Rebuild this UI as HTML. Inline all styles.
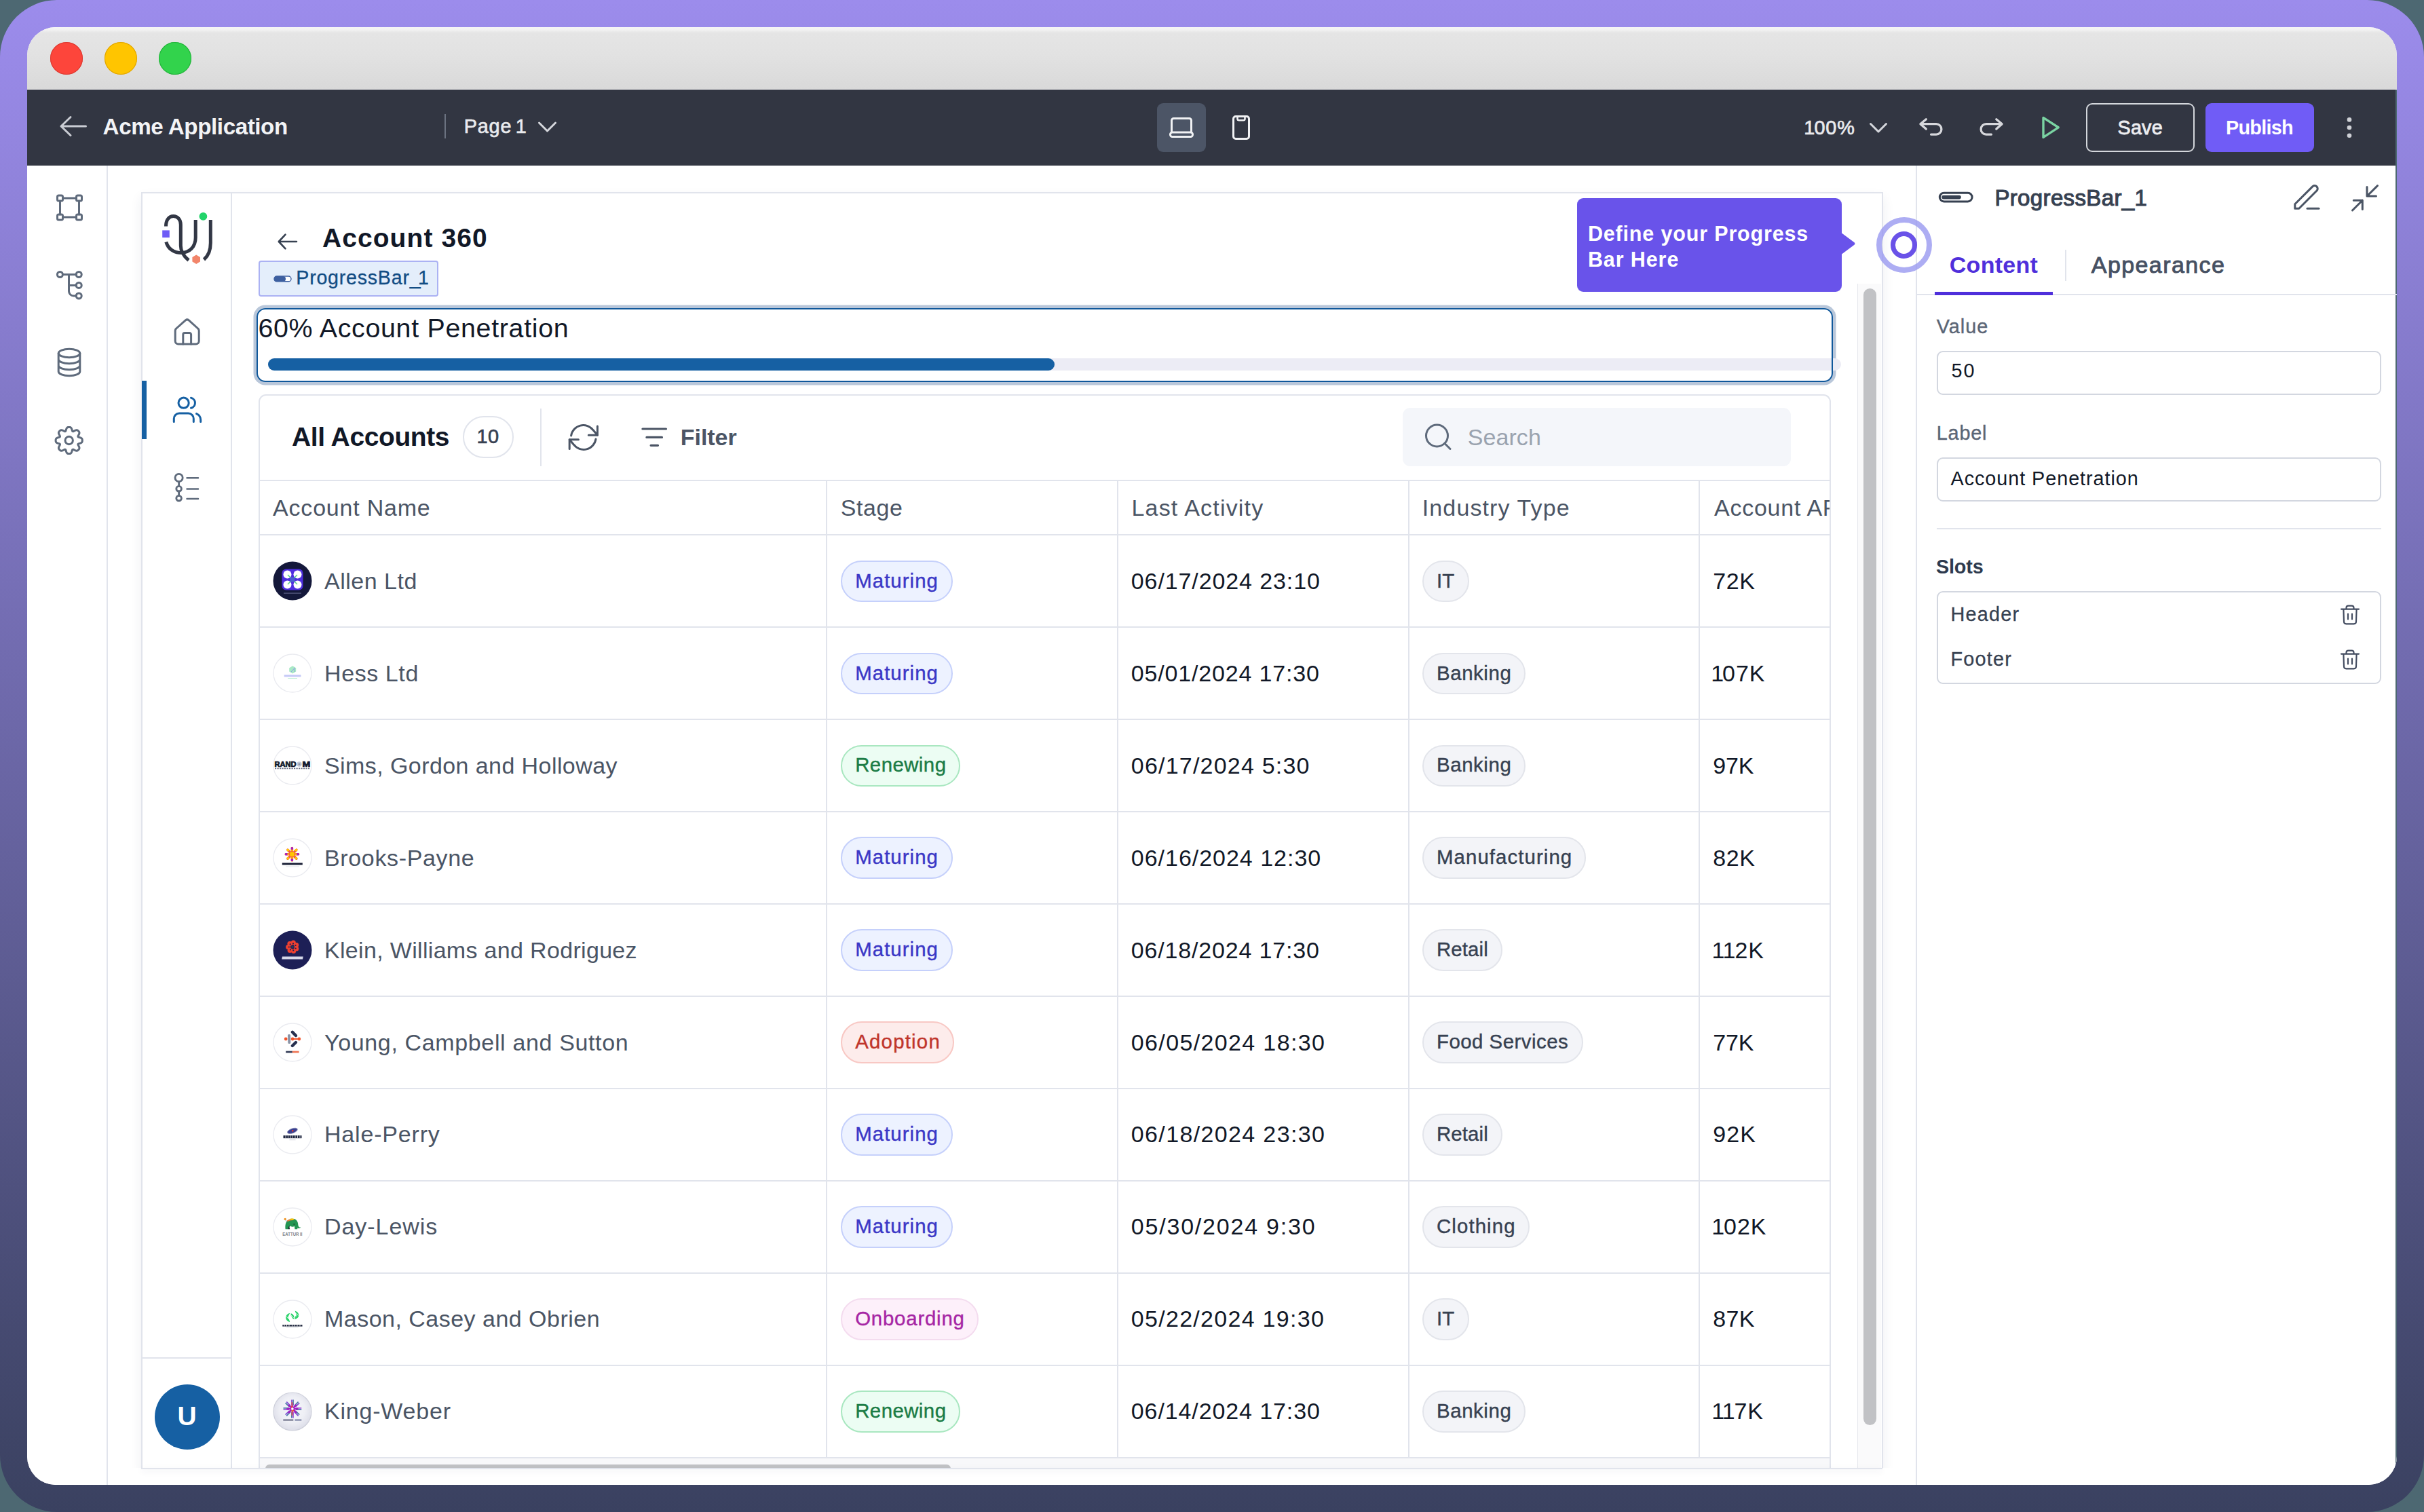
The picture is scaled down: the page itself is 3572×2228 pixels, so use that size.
<!DOCTYPE html>
<html><head><meta charset="utf-8"><title>Acme Application</title>
<style>
html,body{margin:0;padding:0;}
body{width:3572px;height:2228px;overflow:hidden;background:#4d6872;font-family:"Liberation Sans",sans-serif;}
#bg{position:absolute;left:0;top:0;width:3572px;height:2228px;border-radius:84px;background:linear-gradient(180deg,#9c8cec 0%,#3a4160 100%);}
#win{position:absolute;left:40px;top:40px;width:3492px;height:2148px;border-radius:42px;overflow:hidden;background:#fff;}
#c{position:absolute;left:-40px;top:-40px;width:3572px;height:2228px;}
#c div,#c svg,#c span{position:absolute;}
#c span{white-space:pre;}
#c svg{overflow:visible;}
</style></head>
<body>
<div id="bg"></div>
<div id="win"><div id="c">
<div style="left:40px;top:40px;width:3492px;height:92px;background:linear-gradient(180deg,#f5f5f5 0px,#f2f2f2 4px,#e5e5e5 8.5px,#e2e2e2 40px,#d9d9d9 91px);"></div>
<div style="left:74px;top:62px;width:48px;height:48px;border-radius:50%;background:#fd453b;box-shadow:inset 0 0 0 1px #d93a31;"></div>
<div style="left:154px;top:62px;width:48px;height:48px;border-radius:50%;background:#ffc500;box-shadow:inset 0 0 0 1px #dfa300;"></div>
<div style="left:234px;top:62px;width:48px;height:48px;border-radius:50%;background:#32d34c;box-shadow:inset 0 0 0 1px #22b23a;"></div>
<div style="left:40px;top:132px;width:3492px;height:112px;background:#323642;"></div>
<div style="left:40px;top:244px;width:3492px;height:1944px;background:#fff;"></div>
<div style="left:3530px;top:132px;width:2px;height:2056px;background:#4d6872;"></div>
<div style="left:40px;top:131px;width:3492px;height:1.2px;background:#f4f4f4;"></div>
<div style="left:157px;top:244px;width:2px;height:1944px;background:#e1e4ec;"></div>
<div style="left:2823px;top:244px;width:2px;height:1944px;background:#e1e4ec;"></div>
<svg style="left:80px;top:160px;" width="60" height="52" viewBox="0 0 60 52" fill="none"><path d="M46.5 26H10.5M24 12.5L10 26l14 13.5" stroke="#c9ccd3" stroke-width="3" stroke-linecap="round" stroke-linejoin="round"/></svg>
<div style="left:654.5px;top:168px;width:2px;height:36px;background:#6b7280;"></div>
<svg style="left:786px;top:172px;" width="40" height="30" viewBox="0 0 40 30" fill="none"><path d="M8.5 9L20.5 21L32.5 9" stroke="#d5d7dc" stroke-width="3" stroke-linecap="round" stroke-linejoin="round"/></svg>
<div style="left:1705px;top:152px;width:72px;height:72px;background:#4c5566;border-radius:9px;"></div>
<svg style="left:1705px;top:152px;" width="72" height="72" viewBox="0 0 72 72" fill="none"><path d="M21.5 43V25.5a3 3 0 0 1 3-3h23a3 3 0 0 1 3 3V43" stroke="#f1f2f4" stroke-width="3"/><rect x="19.5" y="43" width="33" height="6.5" rx="3" stroke="#f1f2f4" stroke-width="3"/></svg>
<svg style="left:1800px;top:152px;" width="60" height="72" viewBox="0 0 60 72" fill="none"><rect x="17.5" y="19.5" width="23" height="33" rx="3.5" stroke="#f1f2f4" stroke-width="3"/><path d="M23.5 20v3a2.2 2.2 0 0 0 2.2 2.2h6.600000000000001a2.2 2.2 0 0 0 2.2-2.2v-3" stroke="#f1f2f4" stroke-width="2.6"/></svg>
<svg style="left:2748px;top:173px;" width="40" height="30" viewBox="0 0 40 30" fill="none"><path d="M8.5 9.5L20 21L31.5 9.5" stroke="#d5d7dc" stroke-width="3" stroke-linecap="round" stroke-linejoin="round"/></svg>
<svg style="left:2820px;top:165px;" width="52" height="44" viewBox="0 0 52 44" fill="none"><path d="M18.3 10.7L9.9 17.7L18.3 25.1M10.5 17.7H33.2a7.7 7.7 0 0 1 0 15.4H25.5" stroke="#d6d7db" stroke-width="3.3" stroke-linecap="round" stroke-linejoin="round"/></svg>
<svg style="left:2908px;top:165px;" width="52" height="44" viewBox="0 0 52 44" fill="none"><path d="M33.8 10.7L42.1 17.7L33.8 25.1M41.5 17.7H18.8a7.7 7.7 0 0 0 0 15.4H26.5" stroke="#d6d7db" stroke-width="3.3" stroke-linecap="round" stroke-linejoin="round"/></svg>
<svg style="left:3000px;top:165px;" width="44" height="46" viewBox="0 0 44 46" fill="none"><path d="M11 8.4L33.2 22.8L11 37.4Z" stroke="#7ad3a2" stroke-width="3.4" stroke-linejoin="round"/></svg>
<div style="left:3074px;top:152px;width:160px;height:72px;border:2px solid #d4d7dc;border-radius:9px;box-sizing:border-box;"></div>
<div style="left:3250px;top:152px;width:160px;height:72px;background:#705cf6;border-radius:9px;"></div>
<svg style="left:3450px;top:165px;" width="24" height="46" viewBox="0 0 24 46" fill="none"><circle cx="12" cy="11.4" r="3.3" fill="#cfd1d6"/><circle cx="12" cy="23" r="3.3" fill="#cfd1d6"/><circle cx="12" cy="34.7" r="3.3" fill="#cfd1d6"/></svg>
<svg style="left:78px;top:281px;" width="50" height="50" viewBox="0 0 50 50" fill="none"><g stroke="#5f6b7c" stroke-width="3" stroke-linecap="round" stroke-linejoin="round"><rect x="6.5" y="7" width="8" height="8" rx="2"/><rect x="34.5" y="7" width="8" height="8" rx="2"/><rect x="6.5" y="35" width="8" height="8" rx="2"/><rect x="34.5" y="35" width="8" height="8" rx="2"/><path d="M14.5 11H34.5M14.5 39H34.5M10.5 15V35M38.500000000000004 15V35"/></g></svg>
<svg style="left:77.5px;top:394px;" width="50" height="52" viewBox="0 0 50 52" fill="none"><g stroke="#5f6b7c" stroke-width="3" stroke-linecap="round" stroke-linejoin="round"><circle cx="10.4" cy="10.5" r="4"/><circle cx="38.2" cy="10.5" r="4"/><circle cx="38.2" cy="26.4" r="4"/><circle cx="38.2" cy="42" r="4"/><path d="M14.4 10.5H34.2M23.5 10.5V35a7 7 0 0 0 7 7h3.7M23.5 26.4H34.2"/></g></svg>
<svg style="left:78px;top:507.3px;" width="50" height="54" viewBox="0 0 50 54" fill="none"><g stroke="#5f6b7c" stroke-width="3" stroke-linecap="round" stroke-linejoin="round"><ellipse cx="24" cy="13.5" rx="15.8" ry="6.3"/><path d="M8.2 13.5V40.5c0 3.5 7 6.300000000000001 15.8 6.300000000000001s15.8-2.8 15.8-6.300000000000001V13.5M8.2 22.5c0 3.5 7 6.300000000000001 15.8 6.300000000000001s15.8-2.8 15.8-6.300000000000001M8.2 31.5c0 3.5 7 6.300000000000001 15.8 6.300000000000001s15.8-2.8 15.8-6.300000000000001"/></g></svg>
<svg style="left:70px;top:620px;" width="64" height="60" viewBox="0 0 64 60" fill="none"><g stroke="#5f6b7c" stroke-width="3" stroke-linecap="round" stroke-linejoin="round"><path d="M31.70 9.40L32.47 9.42L33.23 9.52L33.97 9.80L34.66 10.34L35.25 11.17L35.72 12.24L36.09 13.43L36.40 14.52L36.73 15.36L37.17 15.79L37.79 15.79L38.61 15.44L39.61 14.88L40.70 14.31L41.80 13.88L42.81 13.71L43.67 13.81L44.39 14.14L45.00 14.61L45.56 15.14L46.09 15.70L46.56 16.31L46.89 17.03L46.99 17.89L46.82 18.90L46.39 20.00L45.82 21.09L45.26 22.09L44.91 22.91L44.91 23.53L45.34 23.97L46.18 24.30L47.27 24.61L48.46 24.98L49.53 25.45L50.36 26.04L50.90 26.73L51.18 27.47L51.28 28.23L51.30 29.00L51.28 29.77L51.18 30.53L50.90 31.27L50.36 31.96L49.53 32.55L48.46 33.02L47.27 33.39L46.18 33.70L45.34 34.03L44.91 34.47L44.91 35.09L45.26 35.91L45.82 36.91L46.39 38.00L46.82 39.10L46.99 40.11L46.89 40.97L46.56 41.69L46.09 42.30L45.56 42.86L45.00 43.39L44.39 43.86L43.67 44.19L42.81 44.29L41.80 44.12L40.70 43.69L39.61 43.12L38.61 42.56L37.79 42.21L37.17 42.21L36.73 42.64L36.40 43.48L36.09 44.57L35.72 45.76L35.25 46.83L34.66 47.66L33.97 48.20L33.23 48.48L32.47 48.58L31.70 48.60L30.93 48.58L30.17 48.48L29.43 48.20L28.74 47.66L28.15 46.83L27.68 45.76L27.31 44.57L27.00 43.48L26.67 42.64L26.23 42.21L25.61 42.21L24.79 42.56L23.79 43.12L22.70 43.69L21.60 44.12L20.59 44.29L19.73 44.19L19.01 43.86L18.40 43.39L17.84 42.86L17.31 42.30L16.84 41.69L16.51 40.97L16.41 40.11L16.58 39.10L17.01 38.00L17.58 36.91L18.14 35.91L18.49 35.09L18.49 34.47L18.06 34.03L17.22 33.70L16.13 33.39L14.94 33.02L13.87 32.55L13.04 31.96L12.50 31.27L12.22 30.53L12.12 29.77L12.10 29.00L12.12 28.23L12.22 27.47L12.50 26.73L13.04 26.04L13.87 25.45L14.94 24.98L16.13 24.61L17.22 24.30L18.06 23.97L18.49 23.53L18.49 22.91L18.14 22.09L17.58 21.09L17.01 20.00L16.58 18.90L16.41 17.89L16.51 17.03L16.84 16.31L17.31 15.70L17.84 15.14L18.40 14.61L19.01 14.14L19.73 13.81L20.59 13.71L21.60 13.88L22.70 14.31L23.79 14.88L24.79 15.44L25.61 15.79L26.23 15.79L26.67 15.36L27.00 14.52L27.31 13.43L27.68 12.24L28.15 11.17L28.74 10.34L29.43 9.80L30.17 9.52L30.93 9.42Z"/><circle cx="31.7" cy="29" r="5.7"/></g></svg>
<div style="left:208px;top:283px;width:2567px;height:1882px;border:2px solid #e1e4ec;box-sizing:border-box;background:#fff;box-shadow:0 8px 16px rgba(40,50,90,.08);"></div>
<div style="left:340px;top:285px;width:2px;height:1878px;background:#e1e4ec;"></div>
<div style="left:210px;top:2000px;width:130px;height:2px;background:#e1e4ec;"></div>
<div style="left:209px;top:561px;width:7px;height:86px;background:#1660a3;"></div>
<div style="left:227.7px;top:2039.6px;width:96px;height:96px;border-radius:50%;background:#1660a3;"></div>
<svg style="left:232px;top:306px;" width="90" height="90" viewBox="0 0 90 90" fill="none"><g stroke="#323745" stroke-width="5" stroke-linecap="butt" fill="none">
<path d="M12.5 27.5C12.5 18 17 12.5 23.5 12.5C30 12.5 34.3 18 34.3 25V56C34.3 64 38 71 46 77.5"/>
<path d="M12.8 50.5C15.5 60 23.5 66.5 34.5 66.5C47 66.5 56.2 58 56.2 44V18"/>
<path d="M78.3 18V52C78.3 63 75 71 68.5 76.5"/>
</g>
<circle cx="67.4" cy="12.8" r="5.9" fill="#22d46a"/>
<rect x="7.2" y="33.4" width="10.6" height="10.6" fill="#6f5cf6"/>
<path d="M57.2 69.6L63 73V79.6L57.2 83L51.4 79.6V73Z" fill="#f2856a"/></svg>
<svg style="left:250px;top:462px;" width="52" height="54" viewBox="0 0 52 54" fill="none"><g stroke="#5f6b7c" stroke-width="3" stroke-linecap="round" stroke-linejoin="round"><path d="M8.2 25.3V40.5a4.5 4.5 0 0 0 4.5 4.5H38.7a4.5 4.5 0 0 0 4.5-4.5V25.3a4.2 4.2 0 0 0-1.6-3.3L28.2 9.9a3.8 3.8 0 0 0-4.8 0L9.8 22a4.2 4.2 0 0 0-1.6 3.3Z"/><path d="M19.8 45V31a2.4 2.4 0 0 1 2.4-2.4h7a2.4 2.4 0 0 1 2.4 2.4V45"/></g></svg>
<svg style="left:248px;top:578px;" width="56" height="52" viewBox="0 0 56 52" fill="none"><g stroke="#1660a3" stroke-width="3" stroke-linecap="round" stroke-linejoin="round"><circle cx="22.6" cy="15.7" r="7.6"/><path d="M8.3 43.5v-4.6a7.8 7.8 0 0 1 7.8-7.8h13.4a7.8 7.8 0 0 1 7.8 7.8v4.6"/><path d="M33.5 8.2a7.7 7.7 0 0 1 0 15"/><path d="M41.5 31.6a10 10 0 0 1 6.2 9.2v2.7"/></g></svg>
<svg style="left:250px;top:690px;" width="52" height="56" viewBox="0 0 52 56" fill="none"><g stroke="#5f6b7c" stroke-width="2.8" stroke-linecap="round"><circle cx="13.6" cy="14" r="5.6"/><circle cx="13.6" cy="30.2" r="3.8"/><circle cx="13.6" cy="44.2" r="3.8"/><path d="M13.6 19.6V26.4M13.6 34V40.4"/><path stroke-width="2.5" d="M25.5 14.2H42M25.5 30.4H42M25.5 45H42"/></g></svg>
<svg style="left:400px;top:336px;" width="50" height="40" viewBox="0 0 50 40" fill="none"><path d="M37 20H11M20.5 9.7L10.8 20l9.7 10.3" stroke="#374151" stroke-width="2.6" stroke-linecap="round" stroke-linejoin="round"/></svg>
<div style="left:381px;top:384.3px;width:265.4px;height:52.5px;background:#e4eefb;border:2px solid #abb2f3;border-radius:4px;box-sizing:border-box;"></div>
<svg style="left:400px;top:400px;" width="34" height="22" viewBox="0 0 34 22" fill="none"><rect x="4" y="7" width="25" height="7.8" rx="3.9" fill="#fff" stroke="#3d5fa0" stroke-width="1.4"/><rect x="4" y="7" width="17" height="7.8" rx="3.9" fill="#3d5fa0"/></svg>
<div style="left:2324px;top:292.3px;width:390px;height:137.7px;background:#6953ea;border-radius:9px;"></div>
<svg style="left:2712px;top:340px;" width="26" height="40" viewBox="0 0 26 40" fill="none"><path d="M0 2L20.5 17.2a2.2 2.2 0 0 1 0 3.6L0 36Z" fill="#6953ea"/></svg>
<div style="left:378.3px;top:453.7px;width:2322.7px;height:109.3px;background:#fff;border-radius:13px;box-shadow:0 0 0 4.5px #b9c7da;"></div>
<div style="left:394.8px;top:527.8px;width:2318.2px;height:18.6px;background:#ececf5;border-radius:9.3px;"></div>
<div style="left:394.8px;top:527.8px;width:1158.9px;height:18.6px;background:#1660a3;border-radius:9.3px;"></div>
<div style="left:378.3px;top:453.7px;width:2322.7px;height:109.3px;border:2px solid #10589b;border-radius:13px;box-sizing:border-box;"></div>
<div style="left:2737.2px;top:418px;width:35.2px;height:1745px;background:#fafafb;border-left:1.6px solid #e6e7ed;box-sizing:border-box;"></div>
<div style="left:2745.9px;top:425px;width:19.2px;height:1675px;background:#c1c2c5;border-radius:9.6px;"></div>
<div style="left:381px;top:581px;width:2317px;height:1582px;border:2px solid #e1e4ec;border-bottom:none;border-radius:11px 11px 0 0;box-sizing:border-box;"></div>
<div style="left:682.4px;top:613.3px;width:74.4px;height:61.3px;border:2px solid #e1e4ec;border-radius:31px;box-sizing:border-box;"></div>
<div style="left:795.5px;top:601.7px;width:2px;height:85px;background:#e1e4ec;"></div>
<svg style="left:832px;top:618px;" width="56" height="52" viewBox="0 0 56 52" fill="none"><g stroke="#4b5565" stroke-width="3" stroke-linecap="round" stroke-linejoin="round"><path d="M48.4 10V23.2H35.3"/><path d="M9.6 24a18.2 18.2 0 0 1 32.5-8.2L48.4 23.2"/><path d="M7.2 43.5V29.8H20.4"/><path d="M46 29a18.2 18.2 0 0 1-32.5 8.2L7.2 29.8"/></g></svg>
<svg style="left:938px;top:622px;" width="54" height="44" viewBox="0 0 54 44" fill="none"><g stroke="#4b5565" stroke-width="3.2" stroke-linecap="round"><path d="M8.9 10H43.5M14.9 22.4H37.5M21.1 34.3H31.5"/></g></svg>
<div style="left:2067px;top:601px;width:572px;height:85.6px;background:#f4f6fa;border-radius:11px;"></div>
<svg style="left:2092px;top:618px;" width="56" height="52" viewBox="0 0 56 52" fill="none"><g stroke="#5f6b7c" stroke-width="3" stroke-linecap="round"><circle cx="25.5" cy="24" r="16"/><path d="M37 35.5L45 43.5"/></g></svg>
<div style="left:383px;top:707px;width:2313px;height:2px;background:#e1e4ec;"></div>
<div style="left:1217.3px;top:708px;width:2px;height:1455px;background:#e1e4ec;"></div>
<div style="left:1646px;top:708px;width:2px;height:1455px;background:#e1e4ec;"></div>
<div style="left:2075px;top:708px;width:2px;height:1455px;background:#e1e4ec;"></div>
<div style="left:2503px;top:708px;width:2px;height:1455px;background:#e1e4ec;"></div>
<div style="left:2520px;top:720px;width:176px;height:60px;overflow:hidden;"><span style="left:6px;top:10.7px;font-size:34px;line-height:34px;color:#4b5565;letter-spacing:0.75px;">Account ARR</span></div>
<div style="left:383px;top:787.0px;width:2313px;height:2px;background:#e1e4ec;"></div>
<svg style="left:401.5px;top:827.3px" width="58" height="58" viewBox="0 0 58 58" fill="none"><circle cx="29" cy="29" r="28.5" fill="#14183a"/><rect x="13.5" y="11.5" width="31" height="31" rx="6" fill="#4f2fe0"/><circle cx="21.5" cy="19.5" r="6" fill="#fff"/><circle cx="36.5" cy="19.5" r="6" fill="#fff"/><circle cx="21.5" cy="34.5" r="6" fill="#fff"/><circle cx="36.5" cy="34.5" r="6" fill="#fff"/><path d="M22 20L36 34M36 20L22 34" stroke="#5fd38a" stroke-width="1.6"/><rect x="25.5" y="23.5" width="7" height="7" rx="1.5" fill="#4a5fd0"/><rect x="16" y="46.5" width="26" height="1.2" fill="#5a5f86"/></svg>
<div style="left:1239px;top:825.6px;width:164.7px;height:61.4px;background:#edf2ff;border:2px solid #c5d0fb;border-radius:31px;box-sizing:border-box;"></div>
<div style="left:2096px;top:825.6px;width:68.6px;height:61.4px;background:#f3f4f8;border:2px solid #e3e5eb;border-radius:31px;box-sizing:border-box;"></div>
<div style="left:383px;top:923.0px;width:2313px;height:2px;background:#e1e4ec;"></div>
<svg style="left:401.5px;top:963.2px" width="58" height="58" viewBox="0 0 58 58" fill="none"><circle cx="29" cy="29" r="28" fill="#fff" stroke="#eaebf0" stroke-width="1.3"/><path d="M24.2 21.3l5-3 5 3v5.2l-5 3-5-3z" fill="#a9e9c6"/><path d="M26.8 27.3l5.6-6.2M31.6 20.8v6.4" stroke="#8f9be8" stroke-width="0.9"/><rect x="16.7" y="31.4" width="24.8" height="3" fill="#c5c9f7"/><rect x="22.2" y="36" width="13.8" height="0.9" fill="#b5ecd0"/></svg>
<div style="left:1239px;top:961.5px;width:164.7px;height:61.4px;background:#edf2ff;border:2px solid #c5d0fb;border-radius:31px;box-sizing:border-box;"></div>
<div style="left:2096px;top:961.5px;width:152px;height:61.4px;background:#f3f4f8;border:2px solid #e3e5eb;border-radius:31px;box-sizing:border-box;"></div>
<div style="left:383px;top:1058.9px;width:2313px;height:2px;background:#e1e4ec;"></div>
<svg style="left:401.5px;top:1099.2px" width="58" height="58" viewBox="0 0 58 58" fill="none"><circle cx="29" cy="29" r="28" fill="#fff" stroke="#eaebf0" stroke-width="1.3"/><text x="2.4" y="30.9" font-family="Liberation Sans, sans-serif" font-weight="700" font-size="10.8" fill="#10162b" stroke="#10162b" stroke-width="0.7" textLength="32" lengthAdjust="spacingAndGlyphs">RAND</text><circle cx="39" cy="27" r="3.7" fill="#c3c9d6"/><circle cx="39" cy="27" r="1.6" fill="#8f98aa"/><text x="43.6" y="30.9" font-family="Liberation Sans, sans-serif" font-weight="700" font-size="10.8" fill="#10162b" stroke="#10162b" stroke-width="0.7" textLength="11.8" lengthAdjust="spacingAndGlyphs">M</text><path d="M3 33.3H55" stroke="#6d7386" stroke-width="1.8" stroke-dasharray="2.2 1.3"/></svg>
<div style="left:1239px;top:1097.5px;width:176.3px;height:61.4px;background:#ecfdf3;border:2px solid #a9e7c0;border-radius:31px;box-sizing:border-box;"></div>
<div style="left:2096px;top:1097.5px;width:152px;height:61.4px;background:#f3f4f8;border:2px solid #e3e5eb;border-radius:31px;box-sizing:border-box;"></div>
<div style="left:383px;top:1194.8px;width:2313px;height:2px;background:#e1e4ec;"></div>
<svg style="left:401.5px;top:1235.1px" width="58" height="58" viewBox="0 0 58 58" fill="none"><circle cx="29" cy="29" r="28" fill="#fff" stroke="#eaebf0" stroke-width="1.3"/><path d="M28.4 19.7L28.4 14.5" stroke="#f4603a" stroke-width="3.6" stroke-linecap="round"/><path d="M31.2 20.9L34.9 17.2" stroke="#f4603a" stroke-width="3.6" stroke-linecap="round"/><path d="M32.4 23.7L37.6 23.7" stroke="#f4603a" stroke-width="3.6" stroke-linecap="round"/><path d="M31.2 26.5L34.9 30.2" stroke="#f4603a" stroke-width="3.6" stroke-linecap="round"/><path d="M28.4 27.7L28.4 32.9" stroke="#f4603a" stroke-width="3.6" stroke-linecap="round"/><path d="M25.6 26.5L21.9 30.2" stroke="#f4603a" stroke-width="3.6" stroke-linecap="round"/><path d="M24.4 23.7L19.2 23.7" stroke="#f4603a" stroke-width="3.6" stroke-linecap="round"/><path d="M25.6 20.9L21.9 17.2" stroke="#f4603a" stroke-width="3.6" stroke-linecap="round"/><rect x="26.8" y="13.5" width="3.2" height="3.2" fill="#a21fc4"/><rect x="27.3" y="17.0" width="2.2" height="2.2" fill="#ffcc00"/><rect x="32.9" y="16.0" width="3.2" height="3.2" fill="#ffcc00"/><rect x="35.4" y="22.1" width="3.2" height="3.2" fill="#a21fc4"/><rect x="32.9" y="22.6" width="2.2" height="2.2" fill="#ffcc00"/><rect x="32.9" y="28.2" width="3.2" height="3.2" fill="#ffcc00"/><rect x="26.8" y="30.7" width="3.2" height="3.2" fill="#a21fc4"/><rect x="27.3" y="28.2" width="2.2" height="2.2" fill="#ffcc00"/><rect x="20.7" y="28.2" width="3.2" height="3.2" fill="#ffcc00"/><rect x="18.2" y="22.1" width="3.2" height="3.2" fill="#a21fc4"/><rect x="21.7" y="22.6" width="2.2" height="2.2" fill="#ffcc00"/><rect x="20.7" y="16.0" width="3.2" height="3.2" fill="#ffcc00"/><rect x="25.2" y="20.5" width="6.4" height="6.4" rx="1" fill="#ffc800"/><rect x="13.8" y="36.5" width="30" height="3" fill="#1c2238"/><rect x="19" y="41.6" width="20" height="0.7" fill="#d5d7de"/></svg>
<div style="left:1239px;top:1233.4px;width:164.7px;height:61.4px;background:#edf2ff;border:2px solid #c5d0fb;border-radius:31px;box-sizing:border-box;"></div>
<div style="left:2096px;top:1233.4px;width:241px;height:61.4px;background:#f3f4f8;border:2px solid #e3e5eb;border-radius:31px;box-sizing:border-box;"></div>
<div style="left:383px;top:1330.8px;width:2313px;height:2px;background:#e1e4ec;"></div>
<svg style="left:401.5px;top:1371.1px" width="58" height="58" viewBox="0 0 58 58" fill="none"><circle cx="29" cy="29" r="28.5" fill="#1d1f56"/><circle cx="30.3" cy="18.1" r="3.5" fill="#f0402f"/><circle cx="34.7" cy="21.5" r="3.5" fill="#f0402f"/><circle cx="34.8" cy="27.0" r="3.5" fill="#f0402f"/><circle cx="30.6" cy="30.6" r="3.5" fill="#f0402f"/><circle cx="25.1" cy="29.5" r="3.5" fill="#f0402f"/><circle cx="22.6" cy="24.6" r="3.5" fill="#f0402f"/><circle cx="24.9" cy="19.5" r="3.5" fill="#f0402f"/><circle cx="30.0" cy="19.3" r="1.1" fill="#1d1f56"/><circle cx="33.6" cy="22.0" r="1.1" fill="#1d1f56"/><circle cx="33.7" cy="26.5" r="1.1" fill="#1d1f56"/><circle cx="30.3" cy="29.4" r="1.1" fill="#1d1f56"/><circle cx="25.9" cy="28.5" r="1.1" fill="#1d1f56"/><circle cx="23.8" cy="24.5" r="1.1" fill="#1d1f56"/><circle cx="25.7" cy="20.4" r="1.1" fill="#1d1f56"/><circle cx="29" cy="24.4" r="1.8" fill="#2a3a55"/><path d="M14 38.6h30.800000000000004l-.8 4H13.2z" fill="#d7d9ea"/></svg>
<div style="left:1239px;top:1369.4px;width:164.7px;height:61.4px;background:#edf2ff;border:2px solid #c5d0fb;border-radius:31px;box-sizing:border-box;"></div>
<div style="left:2096px;top:1369.4px;width:117.7px;height:61.4px;background:#f3f4f8;border:2px solid #e3e5eb;border-radius:31px;box-sizing:border-box;"></div>
<div style="left:383px;top:1466.8px;width:2313px;height:2px;background:#e1e4ec;"></div>
<svg style="left:401.5px;top:1507.0px" width="58" height="58" viewBox="0 0 58 58" fill="none"><circle cx="29" cy="29" r="28" fill="#fff" stroke="#eaebf0" stroke-width="1.3"/><g stroke="#283150" stroke-width="4.4" stroke-linecap="round"><path d="M28.9 13.8L33.9 19.1M33.9 29L28.9 34"/></g><path d="M24 18.9L24.3 29.1" stroke="#8a93a5" stroke-width="4" stroke-linecap="round"/><path d="M29 24H39" stroke="#f2552c" stroke-width="2"/><g fill="#f2552c"><circle cx="19.2" cy="24" r="2.4"/><circle cx="29.1" cy="24" r="2.4"/><circle cx="38.8" cy="24" r="2.4"/></g><rect x="19.2" y="41.7" width="9.6" height="2.8" fill="#3a425c"/><rect x="28.8" y="41.7" width="9.8" height="2.8" fill="#f07a5a"/></svg>
<div style="left:1239px;top:1505.3px;width:166.8px;height:61.4px;background:#fdeceb;border:2px solid #f8c8c4;border-radius:31px;box-sizing:border-box;"></div>
<div style="left:2096px;top:1505.3px;width:236.7px;height:61.4px;background:#f3f4f8;border:2px solid #e3e5eb;border-radius:31px;box-sizing:border-box;"></div>
<div style="left:383px;top:1602.7px;width:2313px;height:2px;background:#e1e4ec;"></div>
<svg style="left:401.5px;top:1643.0px" width="58" height="58" viewBox="0 0 58 58" fill="none"><circle cx="29" cy="29" r="28" fill="#fff" stroke="#eaebf0" stroke-width="1.3"/><ellipse cx="28.9" cy="23.4" rx="7.8" ry="3.4" transform="rotate(-20 28.9 23.4)" fill="#3a3f8f"/><ellipse cx="28.9" cy="23.4" rx="7.8" ry="3.4" transform="rotate(-20 28.9 23.4)" fill="none" stroke="#8d93b8" stroke-width="0.8"/><circle cx="29.2" cy="23.2" r="1.2" fill="#e8382c"/><rect x="15.5" y="30.2" width="27" height="4" fill="#1f2740"/><path d="M19 30.2v4M22.500000000000004 30.2v4M26 30.2v4M29 30.2v4M33 30.2v4M36.5 30.2v4M40 30.2v4" stroke="#fff" stroke-width="0.7"/><rect x="24.4" y="36.2" width="9.2" height="1" fill="#cfd2da"/></svg>
<div style="left:1239px;top:1641.3px;width:164.7px;height:61.4px;background:#edf2ff;border:2px solid #c5d0fb;border-radius:31px;box-sizing:border-box;"></div>
<div style="left:2096px;top:1641.3px;width:117.7px;height:61.4px;background:#f3f4f8;border:2px solid #e3e5eb;border-radius:31px;box-sizing:border-box;"></div>
<div style="left:383px;top:1738.6px;width:2313px;height:2px;background:#e1e4ec;"></div>
<svg style="left:401.5px;top:1778.9px" width="58" height="58" viewBox="0 0 58 58" fill="none"><circle cx="29" cy="29" r="28" fill="#fff" stroke="#eaebf0" stroke-width="1.3"/><path d="M18.6 32.2c-.8-6.500000000000001.6-11.6 4.6-13.8 3.4-2.4 9-2.2 11.6.6 2 2.2 2.4 5 2.6 7.4.4 2.2 1.6 3.4 4 3.2-1.2 1.6-3.6 2-5 .6l-.2 2h-3.800000000000001l-.4-4.2c-2.4 1-5 .8-6.800000000000001-.4-1.6 1.200000000000001-2.2 2.6-2.4 4.6z" fill="#239552"/><path d="M22.5 32.2c.2-2.6 1-4.4 2.6-5.4-.8 2-.6 3.800000000000001.2 5.4z" fill="#1b2a2a"/><path d="M21 19.5c2.6-2.2 8.4-2.4 11.2-.4-3.2-.4-7.6.2-10.4 2.4z" fill="#e8763a"/><rect x="25.7" y="16.6" width="5" height="2.2" fill="#ffc800"/><circle cx="18.2" cy="17.5" r="1.7" fill="#f59a2a"/><path d="M18.8 18.500000000000004l2 3.2" stroke="#6f7f8c" stroke-width="0.8"/><rect x="30.3" y="24.5" width="2.4" height="0.9" fill="#14301f"/><text x="14.3" y="41.6" font-family="Liberation Sans, sans-serif" font-weight="700" font-size="6.6" fill="#7d848c" textLength="29.2" lengthAdjust="spacingAndGlyphs">EATTUR II</text></svg>
<div style="left:1239px;top:1777.2px;width:164.7px;height:61.4px;background:#edf2ff;border:2px solid #c5d0fb;border-radius:31px;box-sizing:border-box;"></div>
<div style="left:2096px;top:1777.2px;width:157.5px;height:61.4px;background:#f3f4f8;border:2px solid #e3e5eb;border-radius:31px;box-sizing:border-box;"></div>
<div style="left:383px;top:1874.6px;width:2313px;height:2px;background:#e1e4ec;"></div>
<svg style="left:401.5px;top:1914.9px" width="58" height="58" viewBox="0 0 58 58" fill="none"><circle cx="29" cy="29" r="28" fill="#fff" stroke="#eaebf0" stroke-width="1.3"/><g fill="#2bd36a"><path d="M25.2 20.1c-3.6.6-6 3.4-6 6.6 0 3 2.400000000000001 5.4 6 6.3l-1.4-4.2c-1.2-.8-1.6-2.2-1.2-3.6z"/><path d="M26.7 20.300000000000004c2.6.6 4.4 2.8 4.7 5.4v3.300000000000001l-2.8-1.8c.2-1.6-.6-2.6-1.9-3.2z"/><path d="M32.6 16.4c3.2.8 5.4 3.2 5.7 6.2.2 3-1.9 5.6-5.7 6.4l.2-4.2c1.400000000000001-.6 2-1.8 1.6-3.2z"/></g><path d="M19.6 24.5l4 4M27 23l3.8 3.8M33.5 19.500000000000004l4 4M33.2 25.5l3.500000000000001-3.500000000000001" stroke="#fff" stroke-width="0.7"/><rect x="14.3" y="37" width="29.2" height="2.6" fill="#2a3146"/><path d="M17 37v2.6M20.5 37v2.6M24 37v2.6M28.500000000000004 37v2.6M32 37v2.6M36 37v2.6M40 37v2.6" stroke="#fff" stroke-width="0.8"/><rect x="19.5" y="41.2" width="18" height="0.7" fill="#d9dbe2"/></svg>
<div style="left:1239px;top:1913.2px;width:202.5px;height:61.4px;background:#fdf0fa;border:2px solid #f4dcef;border-radius:31px;box-sizing:border-box;"></div>
<div style="left:2096px;top:1913.2px;width:68.6px;height:61.4px;background:#f3f4f8;border:2px solid #e3e5eb;border-radius:31px;box-sizing:border-box;"></div>
<div style="left:383px;top:2010.5px;width:2313px;height:2px;background:#e1e4ec;"></div>
<svg style="left:401.5px;top:2050.8px" width="58" height="58" viewBox="0 0 58 58" fill="none"><defs><radialGradient id="kw" cx="50%" cy="45%" r="55%"><stop offset="0" stop-color="#f7f8fb"/><stop offset="0.6" stop-color="#eeeff5"/><stop offset="1" stop-color="#dcdde8"/></radialGradient></defs><circle cx="29" cy="29" r="28" fill="url(#kw)" stroke="#cdcfda" stroke-width="1.2"/><path d="M27.8 20.0L27.8 11.6" stroke="#9a52d6" stroke-width="1.7"/><path d="M30.0 20.0L30.0 11.6" stroke="#4a78a8" stroke-width="1.7"/><path d="M28.9 23.5L28.9 16.5" stroke="#a31fc2" stroke-width="2.6"/><path d="M31.7 20.7L37.6 14.7" stroke="#4a78a8" stroke-width="1.7"/><path d="M33.2 22.2L39.2 16.3" stroke="#7b4fd0" stroke-width="1.7"/><path d="M30.0 23.9L34.9 19.0" stroke="#a31fc2" stroke-width="2.6"/><path d="M33.9 23.9L42.3 23.9" stroke="#9a52d6" stroke-width="1.7"/><path d="M33.9 26.1L42.3 26.1" stroke="#4a78a8" stroke-width="1.7"/><path d="M30.4 25.0L37.4 25.0" stroke="#a31fc2" stroke-width="2.6"/><path d="M33.2 27.8L39.2 33.7" stroke="#4a78a8" stroke-width="1.7"/><path d="M31.7 29.3L37.6 35.3" stroke="#7b4fd0" stroke-width="1.7"/><path d="M30.0 26.1L34.9 31.0" stroke="#a31fc2" stroke-width="2.6"/><path d="M30.0 30.0L30.0 38.4" stroke="#9a52d6" stroke-width="1.7"/><path d="M27.8 30.0L27.8 38.4" stroke="#4a78a8" stroke-width="1.7"/><path d="M28.9 26.5L28.9 33.5" stroke="#a31fc2" stroke-width="2.6"/><path d="M26.1 29.3L20.2 35.3" stroke="#4a78a8" stroke-width="1.7"/><path d="M24.6 27.8L18.6 33.7" stroke="#7b4fd0" stroke-width="1.7"/><path d="M27.8 26.1L22.9 31.0" stroke="#a31fc2" stroke-width="2.6"/><path d="M23.9 26.1L15.5 26.1" stroke="#9a52d6" stroke-width="1.7"/><path d="M23.9 23.9L15.5 23.9" stroke="#4a78a8" stroke-width="1.7"/><path d="M27.4 25.0L20.4 25.0" stroke="#a31fc2" stroke-width="2.6"/><path d="M24.6 22.2L18.6 16.3" stroke="#4a78a8" stroke-width="1.7"/><path d="M26.1 20.7L20.2 14.7" stroke="#7b4fd0" stroke-width="1.7"/><path d="M27.8 23.9L22.9 19.0" stroke="#a31fc2" stroke-width="2.6"/><path d="M28.299999999999997 15V35" stroke="#d9764a" stroke-width="1.6"/><circle cx="28.9" cy="25" r="1.7" fill="#fff"/><circle cx="27.9" cy="21.8" r="1.1" fill="#f04a30"/><circle cx="29.9" cy="27.8" r="1.1" fill="#f04a30"/><rect x="15.3" y="40.4" width="15" height="2.2" fill="#71748c"/><rect x="32.5" y="40.4" width="9.8" height="2.2" fill="#7e86a8"/></svg>
<div style="left:1239px;top:2049.2px;width:176.3px;height:61.4px;background:#ecfdf3;border:2px solid #a9e7c0;border-radius:31px;box-sizing:border-box;"></div>
<div style="left:2096px;top:2049.2px;width:152px;height:61.4px;background:#f3f4f8;border:2px solid #e3e5eb;border-radius:31px;box-sizing:border-box;"></div>
<svg style="left:2850px;top:276px;" width="64" height="30" viewBox="0 0 64 30" fill="none"><rect x="8.3" y="8.3" width="47.8" height="12.6" rx="6.3" stroke="#374151" stroke-width="3"/><path d="M14 14.6H37" stroke="#374151" stroke-width="5.6" stroke-linecap="round"/></svg>
<svg style="left:3372px;top:264px;" width="54" height="54" viewBox="0 0 54 54" fill="none"><g stroke="#4b5565" stroke-width="3" stroke-linecap="round" stroke-linejoin="round"><path d="M9.8 43.3V36.8L36 10.6a4.4 4.4 0 0 1 6.2 6.2L15.8 43.3Z"/><path d="M28 43.3H45"/></g></svg>
<svg style="left:3458px;top:266px;" width="54" height="54" viewBox="0 0 54 54" fill="none"><g stroke="#4b5565" stroke-width="3" stroke-linecap="round" stroke-linejoin="round"><path d="M45.5 7.6L30 23M30 9.6V23H43.5"/><path d="M8.5 44L23.3 29.2M10.3 29.2H23.3V42.4"/></g></svg>
<div style="left:3042.5px;top:367.5px;width:2px;height:46.5px;background:#e1e4ec;"></div>
<div style="left:2825px;top:432.5px;width:707px;height:2px;background:#e1e4ec;"></div>
<div style="left:2851px;top:429.5px;width:174px;height:5.5px;background:#4f2fdb;"></div>
<div style="left:2854px;top:516.6px;width:654.5px;height:65px;border:2px solid #d3d7e0;border-radius:9px;box-sizing:border-box;"></div>
<div style="left:2854px;top:673.6px;width:654.5px;height:65px;border:2px solid #d3d7e0;border-radius:9px;box-sizing:border-box;"></div>
<div style="left:2854px;top:778px;width:654.5px;height:2px;background:#e1e4ec;"></div>
<div style="left:2854px;top:871px;width:654.5px;height:137px;border:2px solid #d3d7e0;border-radius:9px;box-sizing:border-box;"></div>
<svg style="left:3445.3px;top:887px;" width="36" height="38" viewBox="0 0 36 38" fill="none"><g stroke="#434c60" stroke-width="2.15" stroke-linecap="round" stroke-linejoin="round"><path d="M5 10.6H31M12.5 10.6V8.6a3 3 0 0 1 3-3h5a3 3 0 0 1 3 3v2M8.4 10.8L9 29a3.4 3.4 0 0 0 3.4 3.300000000000001H23.6A3.4 3.4 0 0 0 27 29l.6-18.2M15 17.5V25.5M21 17.5V25.5"/></g></svg>
<svg style="left:3445.3px;top:953.2px;" width="36" height="38" viewBox="0 0 36 38" fill="none"><g stroke="#434c60" stroke-width="2.15" stroke-linecap="round" stroke-linejoin="round"><path d="M5 10.6H31M12.5 10.6V8.6a3 3 0 0 1 3-3h5a3 3 0 0 1 3 3v2M8.4 10.8L9 29a3.4 3.4 0 0 0 3.4 3.300000000000001H23.6A3.4 3.4 0 0 0 27 29l.6-18.2M15 17.5V25.5M21 17.5V25.5"/></g></svg>
<span style="left:151.6px;top:170.3px;font-size:33.2px;line-height:33.2px;color:#f3f4f6;font-weight:700;letter-spacing:-0.43px;">Acme Application</span>
<span style="left:683.8px;top:172.2px;font-size:28.8px;line-height:28.8px;color:#e9eaed;letter-spacing:0.78px;-webkit-text-stroke:0.7px #e9eaed;">Page <i style="font-style:normal;margin:0 -3.32px">1</i></span>
<span style="left:2659.8px;top:173.8px;font-size:28.8px;line-height:28.8px;color:#e9eaed;letter-spacing:0.78px;-webkit-text-stroke:0.7px #e9eaed;"><i style="font-style:normal;margin:0 -1.53px">1</i>00%</span>
<span style="left:3120.5px;top:174.0px;font-size:28.8px;line-height:28.8px;color:#ecedf0;letter-spacing:0.20px;-webkit-text-stroke:0.8px #ecedf0;">Save</span>
<span style="left:3280.0px;top:174.0px;font-size:28.8px;line-height:28.8px;color:#ffffff;font-weight:700;letter-spacing:-0.75px;">Publish</span>
<span style="left:261.6px;top:2067.4px;font-size:39px;line-height:39px;color:#ffffff;font-weight:700;">U</span>
<span style="left:474.9px;top:331.2px;font-size:39px;line-height:39px;color:#111827;font-weight:700;letter-spacing:1.09px;">Account 360</span>
<span style="left:436.3px;top:395.2px;font-size:28.6px;line-height:28.6px;color:#134d84;letter-spacing:0.77px;-webkit-text-stroke:0.3px #134d84;">ProgressBar_<i style="font-style:normal;margin:0 -4.38px">1</i></span>
<span style="left:2339.9px;top:328.9px;font-size:30.5px;line-height:30.5px;color:#ffffff;font-weight:700;letter-spacing:0.84px;">Define your Progress</span>
<span style="left:2339.9px;top:367.4px;font-size:30.5px;line-height:30.5px;color:#ffffff;font-weight:700;letter-spacing:0.90px;">Bar Here</span>
<span style="left:380.4px;top:463.9px;font-size:39.4px;line-height:39.4px;color:#111827;letter-spacing:0.68px;">60% Account Penetration</span>
<span style="left:430.0px;top:624.1px;font-size:39px;line-height:39px;color:#111827;font-weight:700;letter-spacing:-0.40px;">All Accounts</span>
<span style="left:702.5px;top:628.5px;font-size:29px;line-height:29px;color:#374151;letter-spacing:0.47px;-webkit-text-stroke:0.6px #374151;">10</span>
<span style="left:1002.8px;top:626.7px;font-size:34px;line-height:34px;color:#4b5565;font-weight:700;letter-spacing:-0.06px;">Filter</span>
<span style="left:2162.8px;top:626.7px;font-size:34px;line-height:34px;color:#9aa3af;letter-spacing:0.06px;">Search</span>
<span style="left:402.1px;top:730.7px;font-size:34px;line-height:34px;color:#4b5565;letter-spacing:0.79px;">Account Name</span>
<span style="left:1238.8px;top:730.7px;font-size:34px;line-height:34px;color:#4b5565;letter-spacing:0.55px;">Stage</span>
<span style="left:1667.5px;top:730.7px;font-size:34px;line-height:34px;color:#4b5565;letter-spacing:1.18px;">Last Activity</span>
<span style="left:2095.8px;top:730.7px;font-size:34px;line-height:34px;color:#4b5565;letter-spacing:1.11px;">Industry Type</span>
<span style="left:478.0px;top:838.7px;font-size:34px;line-height:34px;color:#4b5565;letter-spacing:0.50px;">Allen Ltd</span>
<span style="left:1260.2px;top:840.5px;font-size:29.4px;line-height:29.4px;color:#3b37c6;letter-spacing:1.06px;-webkit-text-stroke:0.4px #3b37c6;">Maturing</span>
<span style="left:1666.8px;top:838.7px;font-size:34px;line-height:34px;color:#111827;letter-spacing:0.89px;">06/17/2024 23:10</span>
<span style="left:2117.0px;top:840.5px;font-size:29.4px;line-height:29.4px;color:#374151;letter-spacing:0.14px;-webkit-text-stroke:0.4px #374151;">IT</span>
<span style="left:2524.3px;top:838.7px;font-size:34px;line-height:34px;color:#111827;letter-spacing:0.62px;">72K</span>
<span style="left:478.0px;top:974.7px;font-size:34px;line-height:34px;color:#4b5565;letter-spacing:0.59px;">Hess Ltd</span>
<span style="left:1260.2px;top:976.5px;font-size:29.4px;line-height:29.4px;color:#3b37c6;letter-spacing:1.06px;-webkit-text-stroke:0.4px #3b37c6;">Maturing</span>
<span style="left:1666.8px;top:974.7px;font-size:34px;line-height:34px;color:#111827;letter-spacing:0.82px;">05/01/2024 17:30</span>
<span style="left:2117.0px;top:976.5px;font-size:29.4px;line-height:29.4px;color:#374151;letter-spacing:0.59px;-webkit-text-stroke:0.4px #374151;">Banking</span>
<span style="left:2524.3px;top:974.7px;font-size:34px;line-height:34px;color:#111827;letter-spacing:0.92px;"><i style="font-style:normal;margin:0 -3.06px">1</i>07K</span>
<span style="left:478.0px;top:1110.6px;font-size:34px;line-height:34px;color:#4b5565;letter-spacing:0.42px;">Sims, Gordon and Holloway</span>
<span style="left:1260.2px;top:1112.4px;font-size:29.4px;line-height:29.4px;color:#1b7c45;letter-spacing:0.44px;-webkit-text-stroke:0.4px #1b7c45;">Renewing</span>
<span style="left:1666.8px;top:1110.6px;font-size:34px;line-height:34px;color:#111827;letter-spacing:1.21px;">06/17/2024 5:30</span>
<span style="left:2117.0px;top:1112.4px;font-size:29.4px;line-height:29.4px;color:#374151;letter-spacing:0.59px;-webkit-text-stroke:0.4px #374151;">Banking</span>
<span style="left:2524.3px;top:1110.6px;font-size:34px;line-height:34px;color:#111827;letter-spacing:-0.23px;">97K</span>
<span style="left:478.0px;top:1246.6px;font-size:34px;line-height:34px;color:#4b5565;letter-spacing:0.65px;">Brooks-Payne</span>
<span style="left:1260.2px;top:1248.4px;font-size:29.4px;line-height:29.4px;color:#3b37c6;letter-spacing:1.06px;-webkit-text-stroke:0.4px #3b37c6;">Maturing</span>
<span style="left:1666.8px;top:1246.6px;font-size:34px;line-height:34px;color:#111827;letter-spacing:0.98px;">06/16/2024 12:30</span>
<span style="left:2117.0px;top:1248.4px;font-size:29.4px;line-height:29.4px;color:#374151;letter-spacing:1.08px;-webkit-text-stroke:0.4px #374151;">Manufacturing</span>
<span style="left:2524.3px;top:1246.6px;font-size:34px;line-height:34px;color:#111827;letter-spacing:0.57px;">82K</span>
<span style="left:478.0px;top:1382.5px;font-size:34px;line-height:34px;color:#4b5565;letter-spacing:0.32px;">Klein, Williams and Rodriguez</span>
<span style="left:1260.2px;top:1384.3px;font-size:29.4px;line-height:29.4px;color:#3b37c6;letter-spacing:1.06px;-webkit-text-stroke:0.4px #3b37c6;">Maturing</span>
<span style="left:1666.8px;top:1382.5px;font-size:34px;line-height:34px;color:#111827;letter-spacing:0.82px;">06/18/2024 17:30</span>
<span style="left:2117.0px;top:1384.3px;font-size:29.4px;line-height:29.4px;color:#374151;letter-spacing:0.12px;-webkit-text-stroke:0.4px #374151;">Retail</span>
<span style="left:2524.3px;top:1382.5px;font-size:34px;line-height:34px;color:#111827;letter-spacing:0.92px;"><i style="font-style:normal;margin:0 -1.90px">1</i><i style="font-style:normal;margin:0 -1.90px">1</i>2K</span>
<span style="left:478.0px;top:1518.5px;font-size:34px;line-height:34px;color:#4b5565;letter-spacing:0.64px;">Young, Campbell and Sutton</span>
<span style="left:1260.2px;top:1520.3px;font-size:29.4px;line-height:29.4px;color:#c0352b;letter-spacing:1.22px;-webkit-text-stroke:0.4px #c0352b;">Adoption</span>
<span style="left:1666.8px;top:1518.5px;font-size:34px;line-height:34px;color:#111827;letter-spacing:1.36px;">06/05/2024 18:30</span>
<span style="left:2117.0px;top:1520.3px;font-size:29.4px;line-height:29.4px;color:#374151;letter-spacing:0.49px;-webkit-text-stroke:0.4px #374151;">Food Services</span>
<span style="left:2524.3px;top:1518.5px;font-size:34px;line-height:34px;color:#111827;letter-spacing:-0.23px;">77K</span>
<span style="left:478.0px;top:1654.4px;font-size:34px;line-height:34px;color:#4b5565;letter-spacing:0.82px;">Hale-Perry</span>
<span style="left:1260.2px;top:1656.2px;font-size:29.4px;line-height:29.4px;color:#3b37c6;letter-spacing:1.06px;-webkit-text-stroke:0.4px #3b37c6;">Maturing</span>
<span style="left:1666.8px;top:1654.4px;font-size:34px;line-height:34px;color:#111827;letter-spacing:1.36px;">06/18/2024 23:30</span>
<span style="left:2117.0px;top:1656.2px;font-size:29.4px;line-height:29.4px;color:#374151;letter-spacing:0.12px;-webkit-text-stroke:0.4px #374151;">Retail</span>
<span style="left:2524.3px;top:1654.4px;font-size:34px;line-height:34px;color:#111827;letter-spacing:1.02px;">92K</span>
<span style="left:478.0px;top:1790.4px;font-size:34px;line-height:34px;color:#4b5565;letter-spacing:0.95px;">Day-Lewis</span>
<span style="left:1260.2px;top:1792.2px;font-size:29.4px;line-height:29.4px;color:#3b37c6;letter-spacing:1.06px;-webkit-text-stroke:0.4px #3b37c6;">Maturing</span>
<span style="left:1666.8px;top:1790.4px;font-size:34px;line-height:34px;color:#111827;letter-spacing:1.79px;">05/30/2024 9:30</span>
<span style="left:2117.0px;top:1792.2px;font-size:29.4px;line-height:29.4px;color:#374151;letter-spacing:1.10px;-webkit-text-stroke:0.4px #374151;">Clothing</span>
<span style="left:2524.3px;top:1790.4px;font-size:34px;line-height:34px;color:#111827;letter-spacing:0.92px;"><i style="font-style:normal;margin:0 -2.06px">1</i>02K</span>
<span style="left:478.0px;top:1926.3px;font-size:34px;line-height:34px;color:#4b5565;letter-spacing:0.48px;">Mason, Casey and Obrien</span>
<span style="left:1260.2px;top:1928.1px;font-size:29.4px;line-height:29.4px;color:#a626a4;letter-spacing:0.79px;-webkit-text-stroke:0.4px #a626a4;">Onboarding</span>
<span style="left:1666.8px;top:1926.3px;font-size:34px;line-height:34px;color:#111827;letter-spacing:1.29px;">05/22/2024 19:30</span>
<span style="left:2117.0px;top:1928.1px;font-size:29.4px;line-height:29.4px;color:#374151;letter-spacing:0.14px;-webkit-text-stroke:0.4px #374151;">IT</span>
<span style="left:2524.3px;top:1926.3px;font-size:34px;line-height:34px;color:#111827;letter-spacing:0.27px;">87K</span>
<span style="left:478.0px;top:2062.3px;font-size:34px;line-height:34px;color:#4b5565;letter-spacing:0.79px;">King-Weber</span>
<span style="left:1260.2px;top:2064.1px;font-size:29.4px;line-height:29.4px;color:#1b7c45;letter-spacing:0.44px;-webkit-text-stroke:0.4px #1b7c45;">Renewing</span>
<span style="left:1666.8px;top:2062.3px;font-size:34px;line-height:34px;color:#111827;letter-spacing:0.89px;">06/14/2024 17:30</span>
<span style="left:2117.0px;top:2064.1px;font-size:29.4px;line-height:29.4px;color:#374151;letter-spacing:0.59px;-webkit-text-stroke:0.4px #374151;">Banking</span>
<span style="left:2524.3px;top:2062.3px;font-size:34px;line-height:34px;color:#111827;letter-spacing:0.92px;"><i style="font-style:normal;margin:0 -2.15px">1</i><i style="font-style:normal;margin:0 -2.15px">1</i>7K</span>
<span style="left:2939.4px;top:274.7px;font-size:33px;line-height:33px;color:#374151;letter-spacing:0.36px;-webkit-text-stroke:1.1px #374151;">ProgressBar_1</span>
<span style="left:2872.8px;top:373.1px;font-size:34px;line-height:34px;color:#4f2fdb;font-weight:700;letter-spacing:0.27px;">Content</span>
<span style="left:3081.8px;top:373.1px;font-size:34px;line-height:34px;color:#465062;letter-spacing:1.41px;-webkit-text-stroke:0.9px #465062;">Appearance</span>
<span style="left:2853.8px;top:466.6px;font-size:28.8px;line-height:28.8px;color:#5b6676;letter-spacing:0.98px;-webkit-text-stroke:0.4px #5b6676;">Value</span>
<span style="left:2875.4px;top:532.4px;font-size:28.8px;line-height:28.8px;color:#111827;letter-spacing:2.00px;">50</span>
<span style="left:2853.8px;top:623.7px;font-size:28.8px;line-height:28.8px;color:#5b6676;letter-spacing:0.81px;-webkit-text-stroke:0.4px #5b6676;">Label</span>
<span style="left:2874.5px;top:690.6px;font-size:28.8px;line-height:28.8px;color:#111827;letter-spacing:0.94px;">Account Penetration</span>
<span style="left:2853.0px;top:821.4px;font-size:28.8px;line-height:28.8px;color:#2e3a4e;font-weight:700;letter-spacing:-0.17px;">Slots</span>
<span style="left:2874.5px;top:890.5px;font-size:28.8px;line-height:28.8px;color:#374151;letter-spacing:1.25px;-webkit-text-stroke:0.3px #374151;">Header</span>
<span style="left:2874.5px;top:956.8px;font-size:28.8px;line-height:28.8px;color:#374151;letter-spacing:1.20px;-webkit-text-stroke:0.3px #374151;">Footer</span>
<div style="left:383px;top:2146.5px;width:2313px;height:2px;background:#e1e4ec;"></div>
<div style="left:383px;top:2148.5px;width:2313px;height:14.5px;background:#f8f8fa;"></div>
<div style="left:391px;top:2157.5px;width:1010px;height:12px;background:#c1c2c5;border-radius:6px;"></div>
<div style="left:159px;top:2163px;width:2664px;height:25px;background:#fff;"></div>
<div style="left:208px;top:2163px;width:2566px;height:2px;background:#e1e4ec;box-shadow:0 3px 10px rgba(40,50,90,.12);"></div>
<div style="left:2764.5px;top:320px;width:82px;height:82px;border-radius:50%;border:8px solid rgba(150,150,240,.78);box-sizing:border-box;"></div>
<div style="left:2785.6px;top:341.1px;width:39.8px;height:39.8px;border-radius:50%;border:7.6px solid #6a52e8;box-sizing:border-box;background:#fff;"></div>
</div></div>
</body></html>
